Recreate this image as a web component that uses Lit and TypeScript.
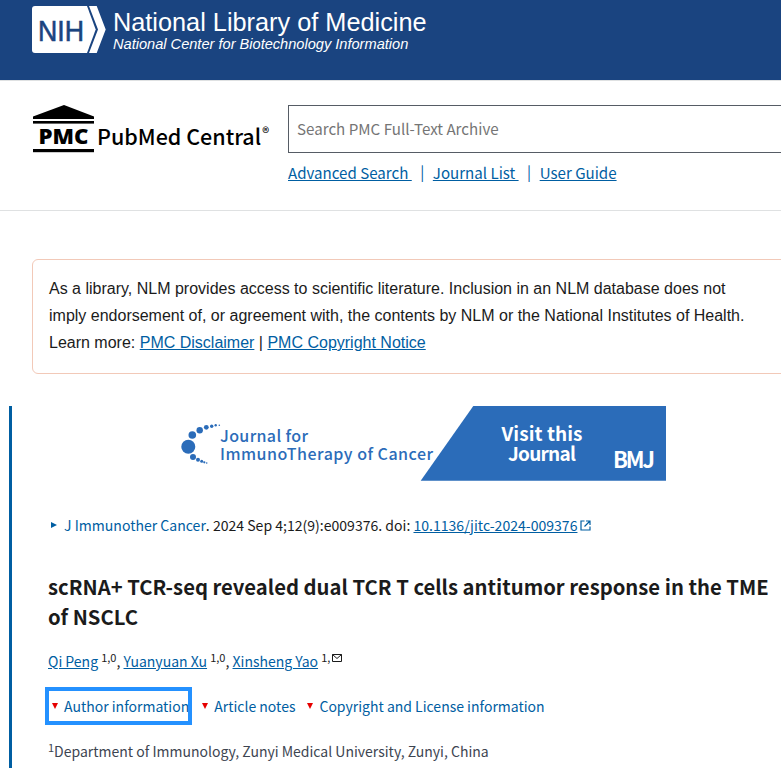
import { LitElement, html, svg, css } from 'lit';
import { customElement } from 'lit/decorators.js';

@customElement('app-root')
export class AppRoot extends LitElement {
	static styles = css`
		:host {
			display: block;
			width: 781px;
			height: 768px;
			overflow: hidden;
			background: #fff;
			color: #1b1b1b;
			font-family: 'Noto Sans CJK SC', 'Noto Sans', sans-serif;
			font-size: 14px;
		}

		a {
			color: #005ea2;
		}

		.banner {
			display: flex;
			gap: 7px;
			height: 80px;
			padding: 6px 0 0 32px;
			box-sizing: border-box;
			background: #1a4480;
			color: #fff;
			font-family: 'Liberation Sans', Arial, sans-serif;
		}

		.banner svg {
			flex: none;
		}

		.banner-title {
			font-size: 25.3px;
			line-height: 28px;
			margin-top: 2px;
		}

		.banner-sub {
			font-size: 14.6px;
			line-height: 16px;
			font-style: italic;
		}

		.masthead {
			display: flex;
			gap: 17px;
			height: 131px;
			box-sizing: border-box;
			padding: 24px 0 0 33px;
			border-top: 1px solid #dfe1e2;
			border-bottom: 1px solid #dfe1e2;
		}

		.brand {
			display: flex;
			align-items: flex-start;
			gap: 2px;
			height: 48px;
			width: 238px;
			flex: none;
		}

		.brand svg {
			flex: none;
		}

		.brand-name {
			color: #000;
			font-size: 21.5px;
			line-height: 28px;
			margin-top: 17px;
			white-space: nowrap;
			font-weight: 500;
		}

		.brand-name sup {
			font-size: 14px;
			line-height: 0;
			vertical-align: 7px;
			margin-left: 1px;
		}

		.search-area {
			flex: none;
			width: 600px;
		}

		.search {
			height: 48px;
			box-sizing: border-box;
			border: 1px solid #565c65;
			padding: 0 8px;
			font-size: 15.15px;
			line-height: 44px;
			color: #757575;
		}

		.search-links {
			display: flex;
			align-items: center;
			gap: 8.5px;
			margin-top: 8px;
			line-height: 22px;
			font-size: 15.1px;
			white-space: pre;
		}

		.search-links .sep {
			color: #005ea2;
			font-size: 15px;
		}

		.notice {
			box-sizing: border-box;
			width: 760px;
			margin: 48px 0 0 32px;
			padding: 15px 32px 17px 16px;
			border: 1px solid #f2c9b8;
			border-radius: 6px;
			font-family: 'Liberation Sans', Arial, sans-serif;
			font-size: 16px;
			line-height: 27px;
			background: #fff;
		}

		.article {
			margin: 32px 0 0 9px;
			padding: 0 0 40px 36px;
			border-left: 3px solid #005ea2;
		}

		.journal {
			display: block;
			margin-left: 133px;
			width: 485px;
			height: 75px;
			font-family: 'Noto Sans CJK SC', 'Noto Sans', sans-serif;
		}

		.citation {
			display: flex;
			align-items: center;
			margin: 33px 0 0 3px;
			font-size: 14.05px;
			line-height: 22px;
			white-space: pre;
		}

		.citation .arrow {
			width: 13px;
			flex: none;
		}

		.citation a.plain,
		.toggle {
			text-decoration: none;
		}

		.citation .external {
			margin-left: 3px;
		}

		h1 {
			margin: 36px 0 0;
			font-size: 20.25px;
			line-height: 30px;
			font-weight: 700;
		}

		.authors {
			margin-top: 18px;
			font-size: 14px;
			line-height: 22px;
			white-space: pre;
		}

		.authors sup {
			font-size: 11px;
			line-height: 0;
			vertical-align: 5px;
		}

		.authors svg {
			vertical-align: 5px;
			margin-left: 2px;
		}

		.toggles {
			display: flex;
			align-items: center;
			gap: 4px;
			margin: 15px 0 0 -3px;
			font-size: 14px;
			line-height: 22px;
			white-space: nowrap;
		}

		.toggle {
			display: flex;
			align-items: center;
			gap: 5px;
			padding: 8px 2px 8px 5px;
		}

		.toggle.focused {
			outline: 4px solid #2491ff;
			outline-offset: -4px;
			padding: 8px 3px 8px 6px;
		}

		.toggle .down {
			width: 0;
			height: 0;
			border-left: 3px solid transparent;
			border-right: 3px solid transparent;
			border-top: 6px solid #e60000;
			margin: 0 1px;
		}

		.affil {
			margin-top: 15px;
			font-size: 14px;
			line-height: 22px;
			color: #3d4551;
		}

		.affil sup {
			font-size: 11px;
			line-height: 0;
			vertical-align: 5px;
		}
	`;

	private renderNihLogo() {
		return html`<svg width="74" height="48" viewBox="0 0 74 48">
			<path
				d="M3 0 H55 L63.7 23.5 L55 47 H3 Q0 47 0 44 V3 Q0 0 3 0 Z"
				fill="#fff"
			></path>
			<path d="M57 0 H64.7 L73.7 23.5 L64.7 47 H57 L66 23.5 Z" fill="#fff"></path>
			<text
				x="6"
				y="34.7"
				font-family="Liberation Sans, Arial, sans-serif"
				font-size="29"
				textLength="46"
				lengthAdjust="spacingAndGlyphs"
				fill="#1a4480"
				stroke="#1a4480"
				stroke-width="0.6"
			>NIH</text>
		</svg>`;
	}

	private renderPmcLogo() {
		return html`<svg width="62" height="48" viewBox="0 0 62 48">
			<path d="M31 0 L61 11.5 V14 H0 V11.5 Z" fill="#000"></path>
			<rect x="0" y="16" width="61" height="2.6" fill="#000"></rect>
			<text
				x="5.5"
				y="38.5"
				font-family="Noto Sans, sans-serif"
				font-size="21"
				font-weight="900"
				textLength="50"
				lengthAdjust="spacingAndGlyphs"
				fill="#000"
			>PMC</text>
			<rect x="0" y="44" width="61" height="3.2" fill="#000"></rect>
		</svg>`;
	}

	private renderJournalBanner() {
		// coordinates are relative to the banner's top left corner
		const dots = [
			[7.3, 40.7, 7],
			[11.3, 29, 3.8],
			[18.7, 24.3, 3.2],
			[25.3, 21.3, 2.4],
			[30.7, 20.3, 1.7],
			[34.7, 19.3, 1.2],
			[38.3, 19.3, 0.8],
			[12, 51, 3],
			[17, 53.7, 2],
			[20.7, 55.3, 1.5],
			[23.3, 56.3, 1.1],
			[25.7, 57, 0.8],
		];
		return html`<svg class="journal" viewBox="0 0 485 75">
			${dots.map(
				([cx, cy, r]) => svg`<circle cx=${cx} cy=${cy} r=${r} fill="#2b6cb9"></circle>`
			)}
			<text x="39" y="36" font-size="16" font-weight="500" fill="#2b6cb9" textLength="88">Journal for</text>
			<text x="39" y="54" font-size="16" font-weight="500" fill="#2b6cb9" textLength="213">ImmunoTherapy of Cancer</text>
			<path d="M292.3 0 H485 V74.7 H239.7 Z" fill="#2b6cb9"></path>
			<text x="361" y="35" font-size="19" font-weight="700" fill="#fff" text-anchor="middle" textLength="81">Visit this</text>
			<text x="361" y="55" font-size="19" font-weight="700" fill="#fff" text-anchor="middle" textLength="68">Journal</text>
			<text x="432" y="62" font-size="22" font-weight="700" fill="#fff" textLength="42">BMJ</text>
		</svg>`;
	}

	render() {
		return html`
			<div class="banner">
				${this.renderNihLogo()}
				<div>
					<div class="banner-title">National Library of Medicine</div>
					<div class="banner-sub">National Center for Biotechnology Information</div>
				</div>
			</div>

			<div class="masthead">
				<div class="brand">
					${this.renderPmcLogo()}
					<div class="brand-name">PubMed Central<sup>®</sup></div>
				</div>
				<div class="search-area">
					<div class="search">Search PMC Full-Text Archive</div>
					<div class="search-links">
						<a href="#">Advanced Search </a>
						<span class="sep">|</span>
						<a href="#">Journal List </a>
						<span class="sep">|</span>
						<a href="#">User Guide</a>
					</div>
				</div>
			</div>

			<div class="notice">
				As a library, NLM provides access to scientific literature. Inclusion in an NLM database does not
				imply endorsement of, or agreement with, the contents by NLM or the National Institutes of Health.<br />
				Learn more: <a href="#">PMC Disclaimer</a> | <a href="#">PMC Copyright Notice</a>
			</div>

			<div class="article">
				${this.renderJournalBanner()}

				<div class="citation">
					<svg class="arrow" width="13" height="8" viewBox="0 0 13 8">
						<path d="M0 1 L6 4 L0 7 Z" fill="#005ea2"></path>
					</svg>
					<a class="plain" href="#">J Immunother Cancer</a>. 2024 Sep 4;12(9):e009376. doi: <a href="#">10.1136/jitc-2024-009376</a>
					<svg class="external" width="11" height="11" viewBox="0 0 11 11" fill="none" stroke="#005ea2" stroke-width="1.2">
						<path d="M4.5 1 H1 V10 H10 V6.5"></path>
						<path d="M6 1 H10 V5 M10 1 L4.5 6.5"></path>
					</svg>
				</div>

				<h1>scRNA+ TCR-seq revealed dual TCR T cells antitumor response in the TME of NSCLC</h1>

				<div class="authors"><a href="#">Qi Peng</a> <sup>1,0</sup>, <a href="#">Yuanyuan Xu</a> <sup>1,0</sup>, <a href="#">Xinsheng Yao</a> <sup>1,</sup><svg width="10" height="8" viewBox="0 0 10 8" fill="none" stroke="#1b1b1b" stroke-width="1"><path d="M.5 .5 H9.5 V7.5 H.5 Z M.5 .5 L5 4.5 L9.5 .5"></path></svg></div>

				<div class="toggles">
					<a class="toggle focused" href="#"><span class="down"></span>Author information</a>
					<a class="toggle" href="#"><span class="down"></span>Article notes</a>
					<a class="toggle" href="#"><span class="down"></span>Copyright and License information</a>
				</div>

				<div class="affil"><sup>1</sup>Department of Immunology, Zunyi Medical University, Zunyi, China</div>
			</div>
		`;
	}
}

declare global {
	interface HTMLElementTagNameMap {
		'app-root': AppRoot;
	}
}
